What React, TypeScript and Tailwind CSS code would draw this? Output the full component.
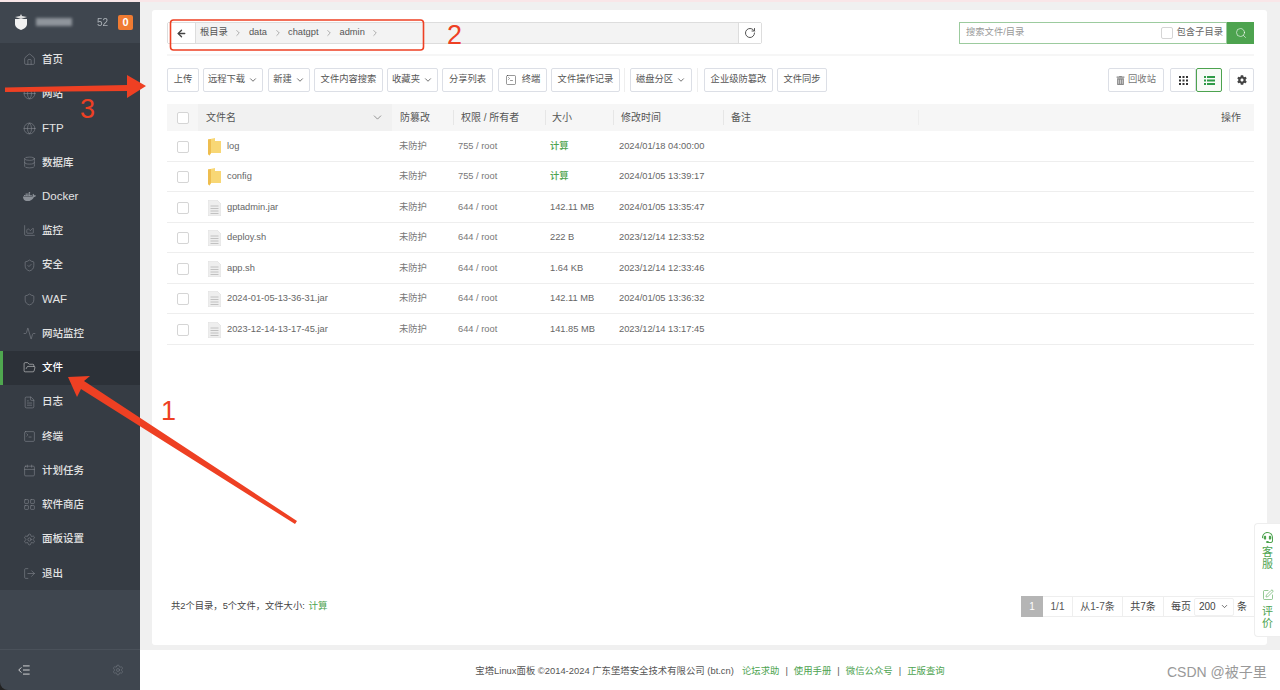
import {
  AreaChart,
  Activity,
  Calendar,
  ChevronDown,
  ChevronRight,
  Database,
  FolderOpen,
  Globe,
  House,
  LayoutGrid,
  LogOut,
  RotateCw,
  Search,
  Settings,
  Shield,
  ShieldCheck,
  SquareTerminal,
  FileText,
  SquarePen,
  ArrowLeft,
  IndentDecrease,
} from "lucide-react";
import { FaDocker, FaCog, FaHeadset, FaTrashAlt } from "react-icons/fa";
import { ReactNode } from "react";

const navItems = [
  { label: "首页", icon: <House size={13} strokeWidth={1} /> },
  { label: "网站", icon: <Globe size={13} strokeWidth={1} /> },
  { label: "FTP", icon: <Globe size={13} strokeWidth={1} />, latin: true },
  { label: "数据库", icon: <Database size={13} strokeWidth={1} /> },
  { label: "Docker", icon: <FaDocker size={13} />, latin: true },
  { label: "监控", icon: <AreaChart size={13} strokeWidth={1} /> },
  { label: "安全", icon: <ShieldCheck size={13} strokeWidth={1} /> },
  { label: "WAF", icon: <Shield size={13} strokeWidth={1} />, latin: true },
  { label: "网站监控", icon: <Activity size={13} strokeWidth={1} /> },
  { label: "文件", icon: <FolderOpen size={13} strokeWidth={1} />, active: true },
  { label: "日志", icon: <FileText size={13} strokeWidth={1} /> },
  { label: "终端", icon: <SquareTerminal size={13} strokeWidth={1} /> },
  { label: "计划任务", icon: <Calendar size={13} strokeWidth={1} /> },
  { label: "软件商店", icon: <LayoutGrid size={13} strokeWidth={1} /> },
  { label: "面板设置", icon: <Settings size={13} strokeWidth={1} /> },
  { label: "退出", icon: <LogOut size={13} strokeWidth={1} /> },
];

const files = [
  { name: "log", dir: true, perm: "755 / root", size: "计算", time: "2024/01/18 04:00:00" },
  { name: "config", dir: true, perm: "755 / root", size: "计算", time: "2024/01/05 13:39:17" },
  { name: "gptadmin.jar", perm: "644 / root", size: "142.11 MB", time: "2024/01/05 13:35:47" },
  { name: "deploy.sh", perm: "644 / root", size: "222 B", time: "2023/12/14 12:33:52" },
  { name: "app.sh", perm: "644 / root", size: "1.64 KB", time: "2023/12/14 12:33:46" },
  { name: "2024-01-05-13-36-31.jar", perm: "644 / root", size: "142.11 MB", time: "2024/01/05 13:36:32" },
  { name: "2023-12-14-13-17-45.jar", perm: "644 / root", size: "141.85 MB", time: "2023/12/14 13:17:45" },
];

function Btn({ w, children, className = "" }: { w: string; children: ReactNode; className?: string }) {
  return (
    <div className={`flex h-6 shrink-0 items-center justify-center gap-[3px] rounded-[2px] border border-[#dcdfe6] bg-white text-[9.3px] text-[#555] ${w} ${className}`}>
      {children}
    </div>
  );
}

function Check() {
  return <span className="block h-3 w-3 rounded-[2px] border border-[#d5d5d5] bg-white" />;
}

function FolderIcon() {
  return (
    <svg width="13" height="18" viewBox="0 0 13 18">
      <path d="M0 1.5 L7 0 L7 3 L13 3 L13 15 L3 15 L1.5 17.5 L0 16 Z" fill="#f8d775" />
      <path d="M0 1.5 L3 1 L3 15 L1.5 17.5 L0 16 Z" fill="#eebd4f" />
    </svg>
  );
}

function FileIcon() {
  return (
    <svg width="13" height="16" viewBox="0 0 13 16">
      <path d="M0 0 H9 L13 4 V16 H0 Z" fill="#eeeeee" stroke="#d8d8d8" strokeWidth="0.5" />
      <path d="M2.5 6 H10.5 M2.5 8.5 H10.5 M2.5 11 H10.5 M2.5 13.5 H10.5" stroke="#b5b5b5" strokeWidth="0.8" />
    </svg>
  );
}

function Annotations() {
  return (
    <svg className="pointer-events-none absolute left-0 top-0" width="1280" height="690">
      <rect x="170.5" y="20" width="253" height="30" rx="3" fill="none" stroke="#ee4023" strokeWidth="1.6" />
      <polygon points="5,87.5 127,85 127,75 146,86 127,98 127,91 5,92" fill="#ee4023" />
      <polygon points="297,521 295,524 81,389 77,397 68,377 90,376 84,381" fill="#ee4023" />
    </svg>
  );
}

export default function App() {
  return (
    <div
      className="relative flex h-[690px] w-[1280px] flex-col overflow-hidden bg-white text-[9.3px] text-[#555]"
      style={{ fontFamily: '"Liberation Sans", "Noto Sans CJK SC", sans-serif' }}
    >
      <div className="h-[2px] shrink-0 bg-[#f9e6e8]" />
      <div className="flex min-h-0 flex-1 bg-[#222]">
        <aside className="flex w-[140px] shrink-0 flex-col rounded-bl-lg bg-[#3f464f] text-[#e3e3e3]">
          <div className="flex h-[40.5px] shrink-0 items-center pl-[14px]">
            <svg width="14" height="16" viewBox="0 0 14 16">
              <path d="M7 0 L8 2 L13 3 L7 5 L1 3 L6 2 Z" fill="#dedede" />
              <path d="M1 5 H13 V10 C13 13 10 15 7 16 C4 15 1 13 1 10 Z" fill="#f2f2f2" />
            </svg>
            <div className="ml-[8px] h-[8px] w-[36px] bg-[#8f959c] blur-[1.5px]" />
            <span className="ml-[25px] text-[10px] text-[#aab0b6] blur-[0.4px]">52</span>
            <span className="ml-[10px] flex h-[15px] w-[15px] items-center justify-center rounded-[2px] bg-[#f07b32] text-[11px] font-bold text-white">0</span>
          </div>
          <nav className="flex h-[547.5px] shrink-0 flex-col bg-[#363c44]">
            {navItems.map((item) => (
              <div
                key={item.label}
                className={`flex h-[34.25px] shrink-0 items-center border-l-[3px] pl-[20px] ${item.active ? "border-[#4fa74f] bg-[#2c3138] text-white" : "border-transparent"}`}
              >
                <span className={`flex w-[19px] justify-start ${item.active ? "text-[#e5e5e5]" : "text-[#8b9097]"}`}>{item.icon}</span>
                <span className={`font-medium ${item.latin ? "text-[11.5px]" : "text-[10.5px]"}`}>{item.label}</span>
              </div>
            ))}
          </nav>
          <div className="flex-1" />
          <div className="flex h-[41px] shrink-0 items-center justify-between border-t border-[#4a515a] pl-[17px] pr-[16px]">
            <IndentDecrease size={14} className="text-[#e5e5e5]" strokeWidth={1.5} />
            <Settings size={12} className="text-[#7d838a]" strokeWidth={1} />
          </div>
        </aside>

        <div className="flex min-w-0 flex-1 flex-col bg-white">
          <main className="flex h-[648px] shrink-0 flex-col bg-[#f0f0f0] pl-[12px] pr-[13px] pt-[8px] pb-[5px]">
            <section className="flex min-h-0 flex-1 flex-col rounded-[3px] bg-white pl-[15px] pr-[13px] pt-[12px]">
              <div className="flex h-[34px] shrink-0 justify-between border-b-[2px] border-[#f6f6f6] pb-[10px]">
                <div className="flex h-[22px] w-[595px] items-center rounded-[2px] border border-[#dddddd] bg-[#f3f3f3]">
                  <div className="flex h-full w-[28px] items-center justify-center border-r border-[#dddddd] bg-white">
                    <ArrowLeft size={11} strokeWidth={3} className="text-[#444]" />
                  </div>
                  <div className="flex flex-1 items-center pl-[4px] text-[#555]">
                    {["根目录", "data", "chatgpt", "admin"].map((p) => (
                      <span key={p} className="flex items-center">
                        <span>{p}</span>
                        <ChevronRight size={10} className="mx-[5.5px] text-[#666]" strokeWidth={1.2} />
                      </span>
                    ))}
                  </div>
                  <div className="flex h-full w-[23px] items-center justify-center border-l border-[#dddddd] bg-white">
                    <RotateCw size={12} className="text-[#555]" />
                  </div>
                </div>
                <div className="flex h-[22px] w-[295px]">
                  <div className="flex flex-1 items-center justify-between border border-[#9ccb9e] pl-[6px] pr-[3px] text-[#999]">
                    <span>搜索文件/目录</span>
                    <span className="flex items-center gap-[4px] text-[#666]">
                      <Check />
                      包含子目录
                    </span>
                  </div>
                  <div className="flex w-[27px] items-center justify-center bg-[#4da34f] text-white">
                    <Search size={12} strokeWidth={1.2} />
                  </div>
                </div>
              </div>

              <div className="mt-[12px] flex h-6 shrink-0 items-center">
                <Btn w="w-[32px]" className="mr-[4px]">上传</Btn>
                <Btn w="w-[60px]" className="mr-[5px]">远程下载<ChevronDown size={10} /></Btn>
                <Btn w="w-[42px]" className="mr-[4px]">新建<ChevronDown size={10} /></Btn>
                <Btn w="w-[69px]" className="mr-[4px]">文件内容搜索</Btn>
                <Btn w="w-[51px]" className="mr-[4px]">收藏夹<ChevronDown size={10} /></Btn>
                <Btn w="w-[51px]" className="mr-[5px]">分享列表</Btn>
                <Btn w="w-[49px]" className="mr-[4px] gap-[5px]"><SquareTerminal size={12} strokeWidth={1} className="text-[#333]" />终端</Btn>
                <Btn w="w-[69px]" className="mr-[4px]">文件操作记录</Btn>
                <span className="mr-[5px] h-6 w-px bg-[#eeeeee]" />
                <Btn w="w-[62px]" className="mr-[5px]">磁盘分区<ChevronDown size={10} /></Btn>
                <span className="mr-[6px] h-6 w-px bg-[#eeeeee]" />
                <Btn w="w-[69px]" className="mr-[4px]">企业级防篡改</Btn>
                <Btn w="w-[50px]">文件同步</Btn>
                <div className="flex-1" />
                <Btn w="w-[56px]" className="mr-[6px] text-[#777]"><FaTrashAlt size={9} className="text-[#888]" />回收站</Btn>
                <Btn w="w-[26px]">
                  <svg width="9" height="9" viewBox="0 0 9 9" fill="#333">
                    <path d="M0 0h2v2H0zM3.5 0h2v2h-2zM7 0h2v2H7zM0 3.5h2v2H0zM3.5 3.5h2v2h-2zM7 3.5h2v2H7zM0 7h2v2H0zM3.5 7h2v2h-2zM7 7h2v2H7z" />
                  </svg>
                </Btn>
                <div className="mr-[7px] flex h-6 w-[26px] items-center justify-center rounded-[2px] border border-[#4da34f] bg-[#f7fbf7]">
                  <svg width="11" height="9" viewBox="0 0 11 9" fill="#2e9b47">
                    <path d="M0 0h2v2H0zM3 0h8v2H3zM0 3.5h2v2H0zM3 3.5h8v2H3zM0 7h2v2H0zM3 7h8v2H3z" />
                  </svg>
                </div>
                <Btn w="w-[25px]"><FaCog size={10} className="text-[#444]" /></Btn>
              </div>

              <div className="mt-[12px] flex h-[27px] shrink-0 items-center bg-[#f6f6f6] text-[10px] text-[#555]">
                <div className="flex h-full w-[31px] items-center justify-center"><Check /></div>
                <div className="flex h-full w-[194px] items-center justify-between bg-[#f1f1f1] pl-[8px] pr-[8px]">
                  <span>文件名</span>
                  <ChevronDown size={13} strokeWidth={1} className="text-[#444]" />
                </div>
                <div className="flex w-[61px] items-center pl-[8px]">防篡改</div>
                <div className="flex w-[92px] items-center border-l border-[#e6e6e6] pl-[7px]">权限 / 所有者</div>
                <div className="flex w-[68px] items-center border-l border-[#e6e6e6] pl-[6px]">大小</div>
                <div className="flex w-[110px] items-center border-l border-[#e6e6e6] pl-[7px]">修改时间</div>
                <div className="flex w-[195px] items-center border-l border-[#e6e6e6] pl-[7px]">备注</div>
                <div className="flex flex-1 items-center justify-end border-l border-[#eeeeee] pr-[13px]">操作</div>
              </div>

              {files.map((f) => (
                <div key={f.name} className="flex h-[30.5px] shrink-0 items-center border-b border-[#eeeeee] pt-[2px] text-[#666]">
                  <div className="flex w-[31px] justify-center"><Check /></div>
                  <div className="flex w-[194px] items-center pl-[10px]">
                    <span className="flex w-[19px]">{f.dir ? <FolderIcon /> : <FileIcon />}</span>
                    <span>{f.name}</span>
                  </div>
                  <div className="w-[60px] pl-[7px] text-[#777]">未防护</div>
                  <div className="w-[92px] pl-[6px] text-[#777]">{f.perm}</div>
                  <div className={`w-[68px] pl-[6px] ${f.dir ? "font-medium text-[#4da34f]" : ""}`}>{f.size}</div>
                  <div className="pl-[7px]">{f.time}</div>
                </div>
              ))}

              <div className="flex-1" />

              <div className="mb-[28px] flex h-[21px] shrink-0 items-center justify-between pl-[4px]">
                <span className="text-[#444]">
                  共2个目录，5个文件，文件大小: <span className="ml-[1px] text-[9.5px] text-[#4da34f]">计算</span>
                </span>
                <div className="flex h-full items-center text-[10px] text-[#555]">
                  <span className="flex h-full w-[22px] items-center justify-center bg-[#b5b5b5] text-white">1</span>
                  <span className="flex h-full w-[30px] items-center justify-center border-y border-r border-[#eeeeee]">1/1</span>
                  <span className="flex h-full w-[50px] items-center justify-center border-y border-r border-[#eeeeee]">从1-7条</span>
                  <span className="flex h-full w-[41px] items-center justify-center border-y border-r border-[#eeeeee] text-[#444]">共7条</span>
                  <span className="flex h-full w-[90px] items-center justify-center gap-[3px] border-y border-[#eeeeee] text-[#444]">
                    每页
                    <span className="flex h-[18px] w-[40px] items-center justify-between rounded-[2px] border border-[#f0f0f0] px-[4px]">
                      200
                      <ChevronDown size={9} />
                    </span>
                    条
                  </span>
                </div>
              </div>
            </section>
          </main>
          <footer className="flex flex-1 items-center justify-center pt-[2px] text-[9.4px] text-[#555]">
            <span>宝塔Linux面板 ©2014-2024 广东堡塔安全技术有限公司 (bt.cn)</span>
            <span className="ml-[8px] text-[#4da34f]">论坛求助</span>
            <span className="mx-[6px]">|</span>
            <span className="text-[#4da34f]">使用手册</span>
            <span className="mx-[6px]">|</span>
            <span className="text-[#4da34f]">微信公众号</span>
            <span className="mx-[6px]">|</span>
            <span className="text-[#4da34f]">正版查询</span>
          </footer>
        </div>
      </div>

      {/* floating contact tab */}
      <div className="absolute right-0 top-[523px] flex h-[114px] w-[26px] flex-col items-center rounded-l-[4px] border border-r-0 border-[#eeeeee] bg-white pt-[8px] text-[11px] leading-[12px] text-[#4da34f]">
        <FaHeadset size={11} />
        <span className="mt-[3px] w-[11px] text-center">客服</span>
        <SquarePen size={12} className="mt-[19px]" strokeWidth={1.2} />
        <span className="mt-[4px] w-[11px] text-center">评价</span>
      </div>

      <Annotations />
      <span className="absolute left-[447px] top-[17px] text-[27px] font-light leading-[36px] text-[#ee4023]">2</span>
      <span className="absolute left-[80px] top-[94px] text-[27px] font-light leading-[30px] text-[#ee4023]">3</span>
      <span className="absolute left-[161px] top-[396px] text-[27px] font-light leading-[30px] text-[#ee4023]">1</span>
      <span className="absolute left-[1167px] top-[663px] text-[14px] leading-[18px] text-[#999]">CSDN @被子里</span>
    </div>
  );
}
